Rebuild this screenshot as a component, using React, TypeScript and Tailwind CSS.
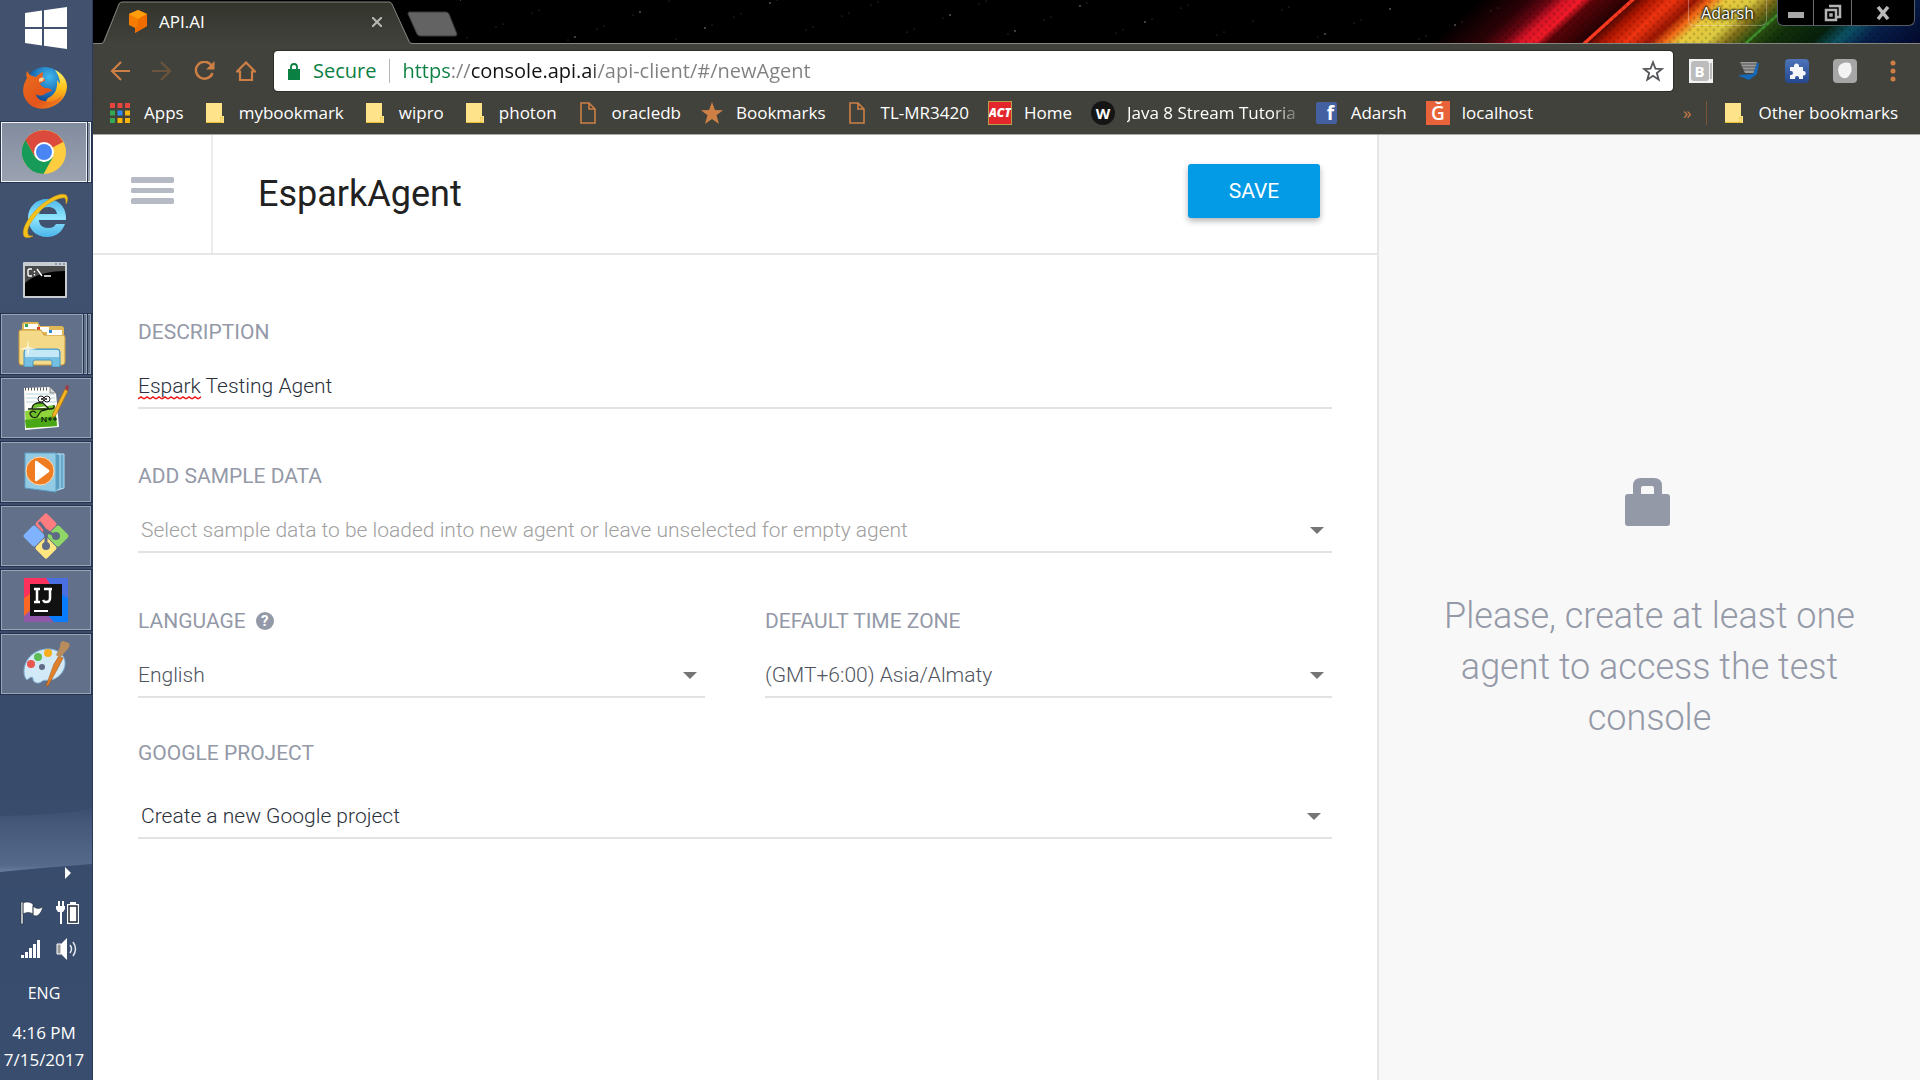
import type { ReactNode } from "react";

/* ---------- Taskbar icons ---------- */

const WindowsLogo = () => (
  <svg width="42" height="42" viewBox="0 0 42 42" fill="#fff">
    <path d="M0 6 17 3.6V20H0zM19 3.3 42 0V20H19zM0 22H17V38.4L0 36zM19 22H42V42L19 38.7z" />
  </svg>
);

const Firefox = () => (
  <svg width="46" height="46" viewBox="0 0 46 46">
    <defs>
      <radialGradient id="ffGlobe" cx="0.6" cy="0.25" r="0.8">
        <stop offset="0" stopColor="#3fb8ee" />
        <stop offset="0.5" stopColor="#1b6fb8" />
        <stop offset="1" stopColor="#0b2a66" />
      </radialGradient>
      <linearGradient id="ffFox" x1="0" y1="0" x2="1" y2="1">
        <stop offset="0" stopColor="#e8701c" />
        <stop offset="0.6" stopColor="#e4531b" />
        <stop offset="1" stopColor="#f08a1d" />
      </linearGradient>
      <linearGradient id="ffTail" x1="0" y1="0" x2="0" y2="1">
        <stop offset="0" stopColor="#fff36a" />
        <stop offset="0.5" stopColor="#fcc21b" />
        <stop offset="1" stopColor="#ee6a1a" />
      </linearGradient>
    </defs>
    <circle cx="23" cy="22" r="20" fill="url(#ffGlobe)" />
    <path d="M33 5c3 4 5 9 5 14l-3-4c1 8-2 15-9 18l-6 9c13 2 24-7 25-20 0-7-4-13-12-17z" fill="url(#ffTail)" />
    <path d="M5 6c-1 3-1 5 0 7-5 8-5 16-1 22 5 8 14 10 22 8 7-2 12-6 14-12-6 5-12 7-18 5-5-1-8-4-8-7 2 2 6 2 9 0 2-2 5-2 7-3-1-3-4-3-7-3-2-1-4-2-5-4 1-2 3-2 5-3 0-2 0-2-2-3-1-2 0-4 0-6-3 1-5 3-7 5-4-1-7-2-9-6z" fill="url(#ffFox)" />
    <path d="M17 14c1-1 3-2 5-1l-1 3-4 1z" fill="#f9d2a0" />
  </svg>
);

const Chrome = () => (
  <svg width="44" height="44" viewBox="0 0 44 44">
    <circle cx="22" cy="22" r="22" fill="#ffcd40" />
    <path d="M22 22 2.9 11A22 22 0 0 1 41 12z" fill="#dc4a3d" />
    <path d="M22 12H41A22 22 0 0 0 3.5 10L13 27z" fill="#dc4a3d" />
    <path d="M3.5 10A22 22 0 0 0 21.5 44L31 27 22 32 13 27z" fill="#169b58" />
    <circle cx="22" cy="22" r="10" fill="#fff" />
    <circle cx="22" cy="22" r="8" fill="#4a86f3" />
  </svg>
);

const InternetExplorer = () => (
  <svg width="46" height="46" viewBox="0 0 46 46">
    <defs>
      <linearGradient id="ieBody" x1="0" y1="0" x2="0" y2="1">
        <stop offset="0" stopColor="#4cb6ea" />
        <stop offset="0.5" stopColor="#8fe6fd" />
        <stop offset="1" stopColor="#4ab4ea" />
      </linearGradient>
    </defs>
    <path d="M44 27H17c0 5 4 8 9 8 4 0 6-1 8-4h9c-3 8-9 13-18 13C14 44 6 36 6 25S14 6 25 6s20 8 19 21zM17 21h18c-1-5-4-7-9-7s-8 3-9 7z" fill="url(#ieBody)" />
    <path d="M44 11c2-4 2-7 0-9-5-3-17 3-27 12C6 24-1 37 2 43c1 2 5 2 9 0-3 0-5 0-5-2-2-5 4-15 13-24S39 4 43 5c1 1 1 3 1 6z" fill="#f4c21c" stroke="#d99b10" strokeWidth="0.6" />
  </svg>
);

const CommandPrompt = () => (
  <svg width="44" height="36" viewBox="0 0 44 36">
    <rect width="44" height="36" rx="1" fill="#c9ccd1" />
    <rect x="2" y="4" width="40" height="30" fill="#000" />
    <path d="M2 4h40v5C25 9 11 13 2 21z" fill="#4a4a4a" />
    <path d="M32 2h2m2 0h2m2 0h2" stroke="#4b6ea0" />
    <path d="M9 7H6l-1 1v5l1 1h3M11.500 9v1.500M11.500 12v1.500M14 7l5 7M21 14h7" stroke="#fff" strokeWidth="1.400" fill="none" />
  </svg>
);

const Explorer = () => (
  <svg width="48" height="46" viewBox="0 0 48 46">
    <path d="M4 4q0-3 3-3h13l2 4H43q3 0 3 3V43H4z" fill="#e0b858" />
    <rect x="6" y="3" width="14" height="5" fill="#fff" />
    <rect x="7" y="3" width="3" height="3" fill="#2ca54e" />
    <rect x="17" y="6" width="14" height="5" fill="#fff" />
    <rect x="19" y="6" width="3" height="3" fill="#e03c28" />
    <path d="M1 11q0-2 2-2h20l3 5h19q2 0 2 2V41q0 3-3 3H3q-2 0-2-3z" fill="#f3d988" stroke="#c99a3c" />
    <rect x="29" y="9" width="15" height="5" fill="#fff" />
    <rect x="31" y="9" width="3" height="3" fill="#2f86d6" />
    <path d="M6 31q0-3 3-3h30q3 0 3 3v15h-8v-5q0-2-2-2H17q-2 0-2 2v5H6z" fill="#74bfe2" stroke="#4795c2" />
    <path d="M7 30q0-1 2-1h30q2 0 2 1v6H7z" fill="#c5e8f6" />
    <path d="m10 18 1 8 8 2-8 1-1 8-1-8-8-1 8-2z" fill="#fffbe8" opacity="0.8" />
  </svg>
);

const NotepadPlus = () => (
  <svg width="46" height="46" viewBox="0 0 46 46">
    <path d="M1 3 27 2l6 6 3 34-34 3z" fill="#fcfdf8" />
    <path d="M3 9h28M3 13h29M3 17h30" stroke="#b7d4e8" />
    <path d="m2 26 30-5 2 20-31 2z" fill="#8fd43a" />
    <path d="m2 35 31-4 1 10-31 2z" fill="#4aa816" />
    <path d="M2 4h24" stroke="#555" strokeWidth="3" strokeDasharray="1 2" />
    <path d="m27 2 6 6h-6z" fill="#d5d9da" stroke="#666" strokeWidth="0.700" />
    <path d="M5 24h22q5 0 4-4M9 24c0-5 5-7 11-6l6 6-8 2-4 6q-5 2-7-3c0-3 4-4 6-1" fill="#6cc02c" stroke="#18240c" strokeWidth="1.300" />
    <circle cx="18" cy="14" r="3" fill="#fff" stroke="#222" />
    <circle cx="24" cy="14" r="3" fill="#fff" stroke="#222" />
    <circle cx="19" cy="14" r="1" />
    <circle cx="23" cy="14" r="1" />
    <path d="M19 37v-5l4 5v-5M25 34h4m1 0h4M27 32v4m5-4v4" stroke="#111" fill="none" />
    <path d="m29 33 1-5L42 4l3 2-12 24z" fill="#f3b524" stroke="#a66a10" strokeWidth="0.700" />
    <path d="m42 4 1-4 3 1-1 5z" fill="#a23b48" />
  </svg>
);

const MediaPlayer = () => (
  <svg width="44" height="42" viewBox="0 0 44 42">
    <path d="M34 3h6v34l-6 2z" fill="#67a9cc" stroke="#b6e0f3" />
    <path d="M31 3h5v35l-5 2z" fill="#5b9cc2" stroke="#b6e0f3" />
    <path d="M1 2h31v39L1 37z" fill="#93cbe4" stroke="#5aa0c6" />
    <circle cx="16" cy="20" r="14" fill="#f07c22" stroke="#ffd9b0" />
    <path d="M11 11q0-2 2-1l12 9q1 1 0 2l-12 9q-2 1-2-1z" fill="#fff" />
  </svg>
);

const GitIcon = () => (
  <svg width="48" height="48" viewBox="0 0 48 48">
    <g transform="rotate(45 24 24)">
      <rect x="7.500" y="7.500" width="16" height="16" rx="2" fill="#ff7d80" />
      <rect x="24.500" y="7.500" width="16" height="16" rx="2" fill="#8fd867" />
      <rect x="7.500" y="24.500" width="16" height="16" rx="2" fill="#80b3ff" />
      <rect x="24.500" y="24.500" width="16" height="16" rx="2" fill="#ffe680" />
    </g>
    <path d="m17 10 7 9v16M24 19l10 5" stroke="#5f6b86" strokeWidth="3" fill="none" />
    <circle cx="24" cy="34" r="4" fill="#5f6b86" />
    <circle cx="34" cy="24" r="4" fill="#5f6b86" />
    <circle cx="24" cy="20" r="3" fill="#5f6b86" />
  </svg>
);

const IntelliJ = () => (
  <svg width="44" height="44" viewBox="0 0 44 44">
    <path d="M0 0H44V44H0z" fill="#087cfa" />
    <path d="M0 0H27L18 44H0z" fill="#fe315d" />
    <path d="M22 0H44V20L30 12z" fill="#4a6fe0" />
    <path d="M0 20 12 12 20 44 0 40z" fill="#f97a12" opacity="0.750" />
    <path d="M0 38 14 26 30 44H0z" fill="#9058a8" />
    <rect x="6" y="6" width="32" height="32" fill="#111" />
    <rect x="10" y="32" width="14" height="2" fill="#fff" />
    <path d="M10 11h6M13 11v13M10 24h6M20 11h8M26 11v9q0 4-4 4-2 0-3-2" stroke="#fff" strokeWidth="2.500" fill="none" />
  </svg>
);

const PaintIcon = () => (
  <svg width="48" height="48" viewBox="0 0 48 48">
    <path d="M5 40C-1 34 2 18 14 12c11-6 24-3 28 6 4 10-4 20-13 22-4 1-6-1-10 2-2 2-8 1-8-3 0-3-3-2-6 1z" fill="#d2e9f7" stroke="#7fb0d4" />
    <circle cx="20" cy="27" r="3" fill="#5f6b86" />
    <circle cx="9" cy="24" r="4" fill="#e8584e" />
    <circle cx="16" cy="17" r="4" fill="#5dbc56" />
    <circle cx="26" cy="13" r="4" fill="#f7ae1c" />
    <path d="m24 46 8-22 5-8 4 2-4 8-11 20z" fill="#e0812c" stroke="#a85413" strokeWidth="0.600" />
    <path d="m34 15 4-8q0-6 3-6l6 2q2 4-4 9l-5 6z" fill="#b88c5c" />
  </svg>
);

/* ---------- System tray icons ---------- */

const FlagIcon = () => (
  <svg width="24" height="24" viewBox="0 0 24 24" fill="#fff" stroke="#1b2638" strokeWidth="0.600">
    <path d="M1 1h2v22H1zM3 2c4-2 7-1 10 1v10c-3-2-6-2-10 0zM13 5c3 3 6 3 10 1-2 6-5 11-10 8z" />
  </svg>
);
const PowerIcon = () => (
  <svg width="24" height="24" viewBox="0 0 24 24" fill="#fff">
    <path d="M2 0h2v5H2zM6 0h2v5H6zM0 5h9v3l-2 3H6v12H4V11H2L0 8z" />
    <path d="M11 3h3V1h6v2h3v20H11z" />
    <path d="M13 5h8v16h-8z" fill="none" stroke="#1b2638" strokeWidth="1.500" />
  </svg>
);
const SignalIcon = () => (
  <svg width="24" height="20" viewBox="0 0 24 20" fill="#fff">
    <path d="M1 16h3v3H1zM5 13h3v6H5zM9 9h3v10H9zM13 5h3v14h-3zM17 1h3v18h-3z" />
  </svg>
);
const SpeakerIcon = () => (
  <svg width="24" height="24" viewBox="0 0 24 24">
    <path d="M1 7h4v10H1z" fill="#9a9a9a" stroke="#fff" />
    <path d="m5 7 6-6v22l-6-6z" fill="#fff" />
    <path d="M14 8q3 4 0 8M17 5q5 7 0 14" stroke="#e4e8ee" strokeWidth="1.500" fill="none" />
  </svg>
);

type Task = { name: string; icon: ReactNode; kind: "plain" | "active" | "open"; stack?: number };

const tasks: Task[] = [
  { name: "Firefox", icon: <Firefox />, kind: "plain" },
  { name: "Google Chrome", icon: <Chrome />, kind: "active", stack: 1 },
  { name: "Internet Explorer", icon: <InternetExplorer />, kind: "plain" },
  { name: "Command Prompt", icon: <CommandPrompt />, kind: "plain" },
  { name: "File Explorer", icon: <Explorer />, kind: "open", stack: 2 },
  { name: "Notepad++", icon: <NotepadPlus />, kind: "open" },
  { name: "Media Player", icon: <MediaPlayer />, kind: "open" },
  { name: "Git", icon: <GitIcon />, kind: "open" },
  { name: "IntelliJ IDEA", icon: <IntelliJ />, kind: "open" },
  { name: "Paint", icon: <PaintIcon />, kind: "open" },
];

function TaskButton({ task }: { task: Task }) {
  if (task.kind === "plain") {
    return (
      <button aria-label={task.name} className="flex h-16 w-full items-center justify-center pr-0.5">
        {task.icon}
      </button>
    );
  }
  const face =
    task.kind === "active"
      ? "border-[#f0f2f5] bg-linear-to-b from-[#828c9f] to-[#9aa2b1]"
      : "border-[#98a4b8] bg-[#627089]";
  return (
    <button aria-label={task.name} className="flex h-16 w-full py-px">
      <span className="flex h-[62px] w-full gap-px border border-[#26334c] bg-[#26334c]">
        <span className={`flex flex-1 items-center justify-center border ${face}`}>{task.icon}</span>
        {Array.from({ length: task.stack ?? 0 }, (_, i) => (
          <span key={i} className={`w-[3px] border-y border-r ${face}`} />
        ))}
      </span>
    </button>
  );
}

function Taskbar() {
  return (
    <aside className="relative flex w-[93px] shrink-0 flex-col overflow-hidden border-r border-[#2a3955] bg-[#3c4e6e] font-['Open_Sans',sans-serif] text-white">
      <svg className="absolute inset-0 size-full" viewBox="0 0 93 1080" preserveAspectRatio="none" aria-hidden="true">
        <defs>
          <linearGradient id="barBase" x1="0" y1="0" x2="0" y2="1">
            <stop offset="0" stopColor="#42526e" />
            <stop offset="0.250" stopColor="#40516f" />
            <stop offset="0.650" stopColor="#384b6b" />
            <stop offset="1" stopColor="#394d6e" />
          </linearGradient>
          <linearGradient id="barWave" x1="0" y1="0" x2="0" y2="1">
            <stop offset="0" stopColor="#3d5072" />
            <stop offset="0.300" stopColor="#475a7c" />
            <stop offset="0.900" stopColor="#566a8c" />
            <stop offset="1" stopColor="#6b7e9e" />
          </linearGradient>
        </defs>
        <path d="M0 0H93V1080H0z" fill="url(#barBase)" />
        <path d="M0 816Q50 816 93 809V864Q50 867 0 872z" fill="url(#barWave)" />
      </svg>
      <button aria-label="Start" className="relative flex h-14 items-center justify-center">
        <WindowsLogo />
      </button>
      <nav aria-label="Running programs" className="relative">
        {tasks.map((t) => (
          <TaskButton key={t.name} task={t} />
        ))}
      </nav>
      <div className="relative mt-auto flex flex-col items-center pr-1 pb-2">
        <button aria-label="Show hidden icons" className="ml-12 flex h-6 items-center">
          <svg width="8" height="12" viewBox="0 0 8 12"><path d="m1 0 6 6-6 6z" fill="#fff" /></svg>
        </button>
        <div className="mt-4 grid grid-cols-2 items-center gap-x-3 gap-y-3 pl-3">
          <FlagIcon />
          <PowerIcon />
          <SignalIcon />
          <SpeakerIcon />
        </div>
        <span className="mt-5 text-[16px] leading-6">ENG</span>
        <span className="mt-4 text-[17px] leading-6">4:16 PM</span>
        <span className="mt-[3px] text-[17px] leading-6">7/15/2017</span>
      </div>
    </aside>
  );
}

/* ---------- Browser chrome ---------- */

const rainbowStops: [number, string][] = [
  [10, "#000000"],
  [60, "#2c0206"],
  [82, "#6a0612"],
  [98, "#d81426"],
  [114, "#f01a28"],
  [126, "#5a0408"],
  [160, "#2a0204"],
  [182, "#b01600"],
  [205, "#f03410"],
  [228, "#9a1602"],
  [242, "#f06414"],
  [258, "#e8c83c"],
  [285, "#dcca40"],
  [305, "#7e6c18"],
  [324, "#2e5212"],
  [350, "#12300a"],
  [390, "#06200c"],
  [415, "#0c5264"],
  [442, "#061f4a"],
  [500, "#04082c"],
];

const ThemeArt = () => (
  <svg className="absolute inset-y-0 right-0 h-full w-[1460px]" viewBox="0 0 1460 44" preserveAspectRatio="xMaxYMid slice" aria-hidden="true">
    <defs>
      <linearGradient id="rainbow" x1="0" x2="1" y1="0" y2="0">
        {rainbowStops.map(([x, color]) => (
          <stop key={x} offset={x / 560} stopColor={color} />
        ))}
      </linearGradient>
      <pattern id="hex" width="8" height="8" patternUnits="userSpaceOnUse">
        <circle cx="2" cy="2" r="1.400" fill="#000" opacity="0.160" />
        <circle cx="6" cy="6" r="1.400" fill="#000" opacity="0.160" />
      </pattern>
    </defs>
    <path d="M0 0H1460V44H0z" fill="#000" />
    <g transform="translate(1008 0) skewX(-48)">
      <path d="M0 0H560V44H0z" fill="url(#rainbow)" />
      <path d="M162 0h5v44h-5z" fill="#ff3a20" />
      <path d="M324 0h4v44h-4z" fill="#3e8c2a" />
    </g>
    <path d="M1000 0H1460V44H1000z" fill="url(#hex)" />
    <g fill="#5a5e62">
      {Array.from({ length: 60 }, (_, i) => (
        <circle key={i} cx={(i * 137) % 1060} cy={(i * 29) % 41} r={i % 5 === 0 ? 0.9 : 0.5} />
      ))}
    </g>
  </svg>
);

function TabStrip() {
  return (
    <div className="relative flex h-11 shrink-0 items-start justify-between overflow-hidden bg-black">
      <ThemeArt />
      <span className="absolute inset-x-0 bottom-0 h-px bg-[#85857f]" />
      <div className="relative flex">
        <div className="relative flex h-11 w-[328px] items-center">
          <svg className="absolute inset-0" width="328" height="44" viewBox="0 0 328 44" aria-hidden="true">
            <defs>
              <linearGradient id="tabFace" x1="0" y1="0" x2="0" y2="1">
                <stop offset="0" stopColor="#33342c" />
                <stop offset="1" stopColor="#41423b" />
              </linearGradient>
            </defs>
            <path d="M9 44 26 4q1-2 3-2H296q2 0 3 2L318 44z" fill="url(#tabFace)" />
            <path d="M0 43.500H8q2 0 3-2L26 4q1-2 3-2H296q2 0 3 2L316 41.500q1 2 3 2H328" fill="none" stroke="#85857f" />
          </svg>
          <div className="relative flex w-full items-center pr-[39px] pl-9">
            <svg width="18" height="24" viewBox="0 0 18 24">
              <path d="m9 0 9 4v12L6 23v-5l-6-3V4z" fill="#f57c00" />
              <path d="m9 0 9 4-9 5-9-5z" fill="#ff9d0a" />
              <path d="M9 9 18 4v12L6 23v-5l3-2z" fill="#ef6c00" />
            </svg>
            <span className="ml-3 text-[17px] leading-6">API.AI</span>
            <button aria-label="Close tab" className="ml-auto">
              <svg width="10" height="10" viewBox="0 0 10 10"><path d="m0 0 10 10M10 0 0 10" stroke="#b9b9b4" strokeWidth="2" /></svg>
            </button>
          </div>
        </div>
        <button aria-label="New tab" className="-ml-[15px] mt-[11px] h-6">
          <svg width="52" height="26" viewBox="0 0 52 26"><path d="M3 1H40q2 0 3 2l8 20q0 2-2 2H14q-2 0-3-2L2 3q0-2 1-2z" fill="#636363" stroke="#3a3a3a" /></svg>
        </button>
      </div>
      <div className="relative flex items-start gap-[10px] pr-[5px]">
        <button className="h-[26px] rounded-b-md border border-t-0 border-white/30 px-3 text-[16px] leading-[26px] [text-shadow:0_0_3px_#000,0_0_3px_#000,0_0_2px_#000]">
          Adarsh
        </button>
        <div className="flex h-[26px] divide-x divide-[#6b6b6b] rounded-b-md border border-t-0 border-[#555c66] bg-black">
          <button aria-label="Minimize" className="flex w-9 items-center justify-center pt-1">
            <svg width="16" height="6" viewBox="0 0 16 6"><path d="M0 0h16v6H0z" fill="#a9a9a9" /></svg>
          </button>
          <button aria-label="Restore" className="flex w-[38px] items-center justify-center">
            <svg width="18" height="18" viewBox="0 0 18 18" fill="none" stroke="#b4b4b4" strokeWidth="2.500"><path d="M5 2h11v11h-3" /><path d="M2 6h10v10H2z" /><path d="M6 10h2v2H6z" strokeWidth="1.500" /></svg>
          </button>
          <button aria-label="Close window" className="flex w-[62px] items-center justify-center">
            <svg width="14" height="14" viewBox="0 0 14 14"><path d="m2 1 10 12M12 1 2 13" stroke="#b9b9b9" strokeWidth="3.500" /></svg>
          </button>
        </div>
      </div>
    </div>
  );
}

function Toolbar() {
  return (
    <div className="flex h-[54px] shrink-0 items-center pr-6 pl-[17px] text-[#cd7f45]">
      <div className="flex gap-[22px]">
        <button aria-label="Back" className="w-5">
          <svg width="20" height="20" viewBox="0 0 20 20" fill="none" stroke="currentColor" strokeWidth="2.200"><path d="M20 10H2M11 1l-9 9 9 9" /></svg>
        </button>
        <button aria-label="Forward" className="w-5 opacity-30">
          <svg width="20" height="20" viewBox="0 0 20 20" fill="none" stroke="currentColor" strokeWidth="2.200"><path d="M0 10h18M9 1l9 9-9 9" /></svg>
        </button>
        <button aria-label="Reload" className="w-5">
          <svg width="21" height="20" viewBox="0 0 21 20"><path d="M17.500 4.500A8.500 8.500 0 1 0 18.500 12" fill="none" stroke="currentColor" strokeWidth="2.400" /><path d="M20.500 0v8.500H12z" fill="currentColor" /></svg>
        </button>
        <button aria-label="Home" className="w-5">
          <svg width="20" height="20" viewBox="0 0 20 20" fill="none" stroke="currentColor" strokeWidth="2.200"><path d="M1 10.500 10 1.500l9 9h-3V19H4v-8.500z" /></svg>
        </button>
      </div>
      <div className="ml-[18px] flex h-10 flex-1 items-center rounded-[3px] bg-white pr-[9px] pl-[14px] text-[20px] leading-7 outline outline-[#2c2d28]">
        <svg width="12" height="17" viewBox="0 0 12 17"><path d="M0 6h12v11H0z" fill="#0b8043" /><path d="M3 7V4q0-3 3-3t3 3v3" fill="none" stroke="#0b8043" strokeWidth="1.800" /></svg>
        <span className="ml-[13px] text-[#0b8043]">Secure</span>
        <span className="ml-[13px] h-6 w-px bg-[#b5b5b5]" />
        <input
          aria-label="Address"
          defaultValue="https://console.api.ai/api-client/#/newAgent"
          className="ml-3 min-w-0 flex-1 bg-[linear-gradient(90deg,#0b8043_49px,#808080_49px,#808080_69px,#111_69px,#111_193px,#808080_193px)] bg-clip-text text-[#808080] outline-none [-webkit-text-fill-color:transparent]"
        />
        <button aria-label="Bookmark this page">
          <svg width="22" height="22" viewBox="0 0 24 24" fill="none" stroke="#55565a" strokeWidth="2"><path d="m12 2.500 2.700 7 7 .3-5.500 4.500 2 7.200L12 17.300l-6.200 4.200 2-7.200L2.300 9.800l7-.3z" /></svg>
        </button>
      </div>
      <div className="ml-4 flex items-center gap-6">
        <button aria-label="Extension B" className="flex size-6 items-center justify-center bg-[#f2f2f2]">
          <span className="flex h-5 w-[18px] items-center justify-center rounded-[3px] bg-[#bcbcbc] text-[15px] leading-5 font-bold text-white">B</span>
          <span className="ml-px h-4 w-0.5 bg-[#bcbcbc]" />
        </button>
        <button aria-label="Reader extension" className="w-6">
          <svg width="24" height="20" viewBox="0 0 24 20"><path d="M3 1h17l-3 11H8z" fill="#9a9a9a" /><path d="M3 3h17M4 6h15M6 9h12" stroke="#555" /><path d="m22 2-2 11-8 6-10-4v-1l14-1 4-11z" fill="#1668b8" /></svg>
        </button>
        <button aria-label="Puzzle extension" className="flex size-6 items-center justify-center rounded-sm bg-linear-to-b from-[#4d74b8] to-[#254890]">
          <svg width="18" height="18" viewBox="0 0 18 18"><path d="M2 5h4V4a2.500 2.500 0 1 1 5 0v1h4v4h.5a2.200 2.200 0 1 1 0 4.500H15V17h-4v-1a2 2 0 0 0-4 0v1H2v-4h1a2 2 0 0 0 0-4H2z" fill="#f4f6fa" /></svg>
        </button>
        <button aria-label="Grey extension" className="flex size-6 items-center justify-center rounded-sm bg-[#a6a6a6]">
          <svg width="18" height="20" viewBox="0 0 18 20"><path d="M3 5q4-5 11-3 4 8-2 14-4 3-8-1-3-5-1-10z" fill="#f3f3f3" /></svg>
        </button>
      </div>
      <button aria-label="Menu" className="ml-[33px]">
        <svg width="6" height="22" viewBox="0 0 6 22" fill="currentColor"><circle cx="3" cy="3" r="2.500" /><circle cx="3" cy="11" r="2.500" /><circle cx="3" cy="19" r="2.500" /></svg>
      </button>
    </div>
  );
}

const Folder = () => (
  <svg width="18" height="22" viewBox="0 0 18 22"><path d="M0 1h16v13h2v7H0z" fill="#ffe38a" /><path d="M0 20h14v-5h3v6H0z" fill="#e8bf35" /><path d="M14.500 15.500h2V20h-2z" fill="#ffe38a" /></svg>
);
const FilePage = () => (
  <svg width="16" height="22" viewBox="0 0 16 22" fill="none" stroke="#cd7f45" strokeWidth="1.600"><path d="M1 1h8l6 6v14H1zM9 1v6h6" /></svg>
);
const appColors = ["#e8453c", "#e8453c", "#e8453c", "#34a853", "#2c8af0", "#f6b50c", "#34a853", "#f6b50c", "#f6b50c"];
const AppsGrid = () => (
  <svg width="20" height="20" viewBox="0 0 20 20">
    {appColors.map((c, i) => (
      <rect key={i} x={(i % 3) * 7.5} y={Math.floor(i / 3) * 7.5} width="5" height="5" fill={c} />
    ))}
  </svg>
);

const bookmarks: { label: string; icon: ReactNode; fade?: boolean }[] = [
  { label: "Apps", icon: <AppsGrid /> },
  { label: "mybookmark", icon: <Folder /> },
  { label: "wipro", icon: <Folder /> },
  { label: "photon", icon: <Folder /> },
  { label: "oracledb", icon: <FilePage /> },
  {
    label: "Bookmarks",
    icon: <svg width="22" height="22" viewBox="0 0 22 22"><path d="m11 0 3 8 8 .3-6.500 5L18 22l-7-5-7 5 2.500-8.700L0 8.300 8 8z" fill="#cd7f45" /></svg>,
  },
  { label: "TL-MR3420", icon: <FilePage /> },
  {
    label: "Home",
    icon: <span className="flex size-6 items-center justify-center bg-[#e3262c] text-[12px] leading-6 font-extrabold text-white italic outline -outline-offset-1 outline-[#b7a04a]">ACT</span>,
  },
  {
    label: "Java 8 Stream Tutoria",
    fade: true,
    icon: <span className="flex size-6 items-center justify-center rounded-full bg-[#151515] text-[15px] leading-6 font-bold">W</span>,
  },
  {
    label: "Adarsh",
    icon: <span className="flex h-[22px] w-[21px] justify-end rounded-xs bg-[#4460a0] pr-[3px] text-[19px] leading-[22px] font-bold">f</span>,
  },
  {
    label: "localhost",
    icon: <span className="flex size-6 items-center justify-center bg-[#e8633a] text-[19px] leading-6 font-semibold">Ğ</span>,
  },
];

function BookmarksBar() {
  return (
    <nav aria-label="Bookmarks" className="flex h-[37px] shrink-0 items-center gap-[19px] border-b border-[#a9a9a6] pr-[22px] pb-[7px] pl-[15px] text-[17px] leading-7 whitespace-nowrap">
      {bookmarks.map((b) => (
        <a key={b.label} href="#" className="flex items-center gap-3">
          <span className="flex w-6 shrink-0 justify-center">{b.icon}</span>
          <span className={b.fade ? "[mask-image:linear-gradient(90deg,#000_86%,#0004)]" : ""}>{b.label}</span>
        </a>
      ))}
      <button aria-label="More bookmarks" className="ml-auto text-[#cd7f45]">»</button>
      <span className="-ml-1 h-6 w-px bg-[#7a5436]" />
      <a href="#" className="-ml-1 flex items-center gap-3">
        <span className="flex w-6 shrink-0 justify-center"><Folder /></span>
        <span>Other bookmarks</span>
      </a>
    </nav>
  );
}

/* ---------- Page ---------- */

const Caret = ({ inset = false }: { inset?: boolean }) => (
  <svg className={`pointer-events-none absolute top-[18px] ${inset ? "right-[11px]" : "right-2"}`} width="14" height="8" viewBox="0 0 14 8" aria-hidden="true">
    <path d="M0 0h14L7 7z" fill="#757575" />
  </svg>
);

function SelectField({ id, label, value, tone, help, inset, tall }: { id: string; label: string; value: string; tone: string; help?: boolean; inset?: boolean; tall?: boolean }) {
  return (
    <div className="min-w-0 flex-1">
      <div className="flex h-6 items-center gap-[10px]">
        <label htmlFor={id} className="text-[21px] leading-6 text-[#9499a8]">{label}</label>
        {help && (
          <button type="button" aria-label="About language" className="flex size-[18px] items-center justify-center rounded-full bg-[#9499a8] text-[15px] leading-[18px] font-bold text-white">?</button>
        )}
      </div>
      <div className={`relative ${tall ? "mt-[30px]" : "mt-[21px]"}`}>
        <select id={id} defaultValue={value} className={`block h-11 w-full appearance-none border-b-2 border-[#e2e2e2] text-[21px] leading-7 font-light outline-none ${tone}`}>
          <option>{value}</option>
        </select>
        <Caret inset={inset} />
      </div>
    </div>
  );
}

function AgentForm() {
  return (
    <form className="flex flex-col px-[45px] pt-[65px]">
      <label htmlFor="description" className="h-6 text-[21px] leading-6 text-[#9499a8]">DESCRIPTION</label>
      <div className="relative mt-[21px] mb-[55px]">
        <input id="description" defaultValue="Espark Testing Agent" className="block h-11 w-full border-b-2 border-[#e2e2e2] text-[21px] leading-7 font-light text-[#2b303b] outline-none" />
        <svg className="pointer-events-none absolute top-[31px] left-0" width="63" height="4" aria-hidden="true">
          <defs>
            <pattern id="squiggle" width="6" height="4" patternUnits="userSpaceOnUse">
              <path d="m0 3 3-2 3 2" fill="none" stroke="#f01818" strokeWidth="1.500" />
            </pattern>
          </defs>
          <rect width="63" height="4" fill="url(#squiggle)" />
        </svg>
      </div>
      <SelectField id="sample" label="ADD SAMPLE DATA" value="Select sample data to be loaded into new agent or leave unselected for empty agent" tone="pl-[3px] text-[#a0a0a0]" />
      <div className="mt-14 mb-[43px] flex gap-[60px]">
        <SelectField id="language" label="LANGUAGE" value="English" tone="text-[#50545e]" help />
        <SelectField id="timezone" label="DEFAULT TIME ZONE" value="(GMT+6:00) Asia/Almaty" tone="text-[#50545e]" />
      </div>
      <SelectField id="project" label="GOOGLE PROJECT" value="Create a new Google project" tone="pl-[3px] text-[#2b303b]" inset tall />
    </form>
  );
}

export default function App() {
  return (
    <div className="flex min-h-screen bg-white">
      <Taskbar />
      <div className="flex min-w-0 flex-1 flex-col">
        <header className="bg-[#41423b] font-['Open_Sans',sans-serif] text-white">
          <TabStrip />
          <Toolbar />
          <BookmarksBar />
        </header>
        <div className="flex flex-1 font-[Roboto,sans-serif]">
          <main className="min-w-0 flex-1">
            <div className="flex h-[120px] items-stretch border-b-2 border-[#e6e6e6]">
              <button aria-label="Open menu" className="flex w-[120px] justify-center border-r-2 border-[#ebebeb] pt-[42px]">
                <svg width="43" height="28" viewBox="0 0 43 28" fill="#b6bac5"><rect width="43" height="6" rx="1.500" /><rect y="11" width="43" height="5" rx="1.500" /><rect y="21" width="43" height="6" rx="1.500" /></svg>
              </button>
              <input aria-label="Agent name" defaultValue="EsparkAgent" className="ml-[45px] min-w-0 flex-1 text-[36px] leading-[48px] text-[#212121] outline-none" />
              <button className="mt-[29px] mr-[57px] h-[54px] w-[132px] rounded-[3px] bg-[#039be5] text-[21px] leading-6 text-white shadow-[0_3px_6px_rgba(0,0,0,0.3)]">SAVE</button>
            </div>
            <AgentForm />
          </main>
          <aside className="flex w-[543px] shrink-0 flex-col items-center border-l-2 border-[#e6e6e6] bg-[#f8f8f8] px-14 pt-[343px] text-center">
            <svg className="mr-1" width="45" height="48" viewBox="0 0 45 48" fill="#9499a8">
              <path d="M3 16H8V8Q8 0 16 0H29Q37 0 37 8V16H42Q45 16 45 19V45Q45 48 42 48H3Q0 48 0 45V19Q0 16 3 16zM16 16H29V10Q29 8 27 8H18Q16 8 16 10z" />
            </svg>
            <p className="mt-[65px] text-[36px] leading-[51px] font-light text-[#9499a8]">Please, create at least one agent to access the test console</p>
          </aside>
        </div>
      </div>
    </div>
  );
}
